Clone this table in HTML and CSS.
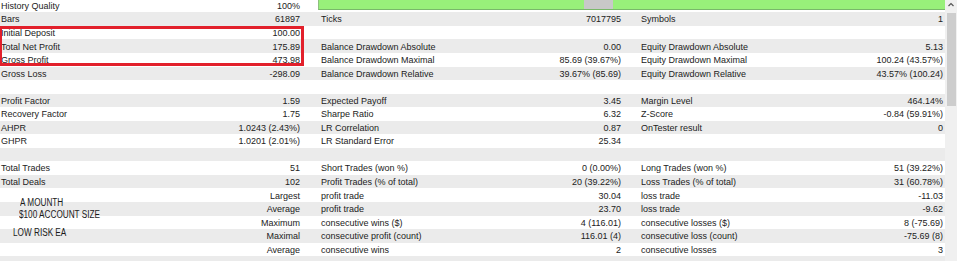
FILE: index.html
```html
<!DOCTYPE html>
<html>
<head>
<meta charset="utf-8">
<link rel="stylesheet" href="styles.css">
</head>
<body>
<div class="page">
  <div class="table">
    <div class="row">
      <div class="cell c1"><span>History Quality</span><span>100%</span></div>
      <div class="qbar"><span class="seg g1"></span><span class="seg gray"></span><span class="seg g2"></span></div>
    </div>
    <div class="row">
      <div class="cell c1"><span>Bars</span><span>61897</span></div>
      <div class="cell c2"><span>Ticks</span><span>7017795</span></div>
      <div class="cell c3"><span>Symbols</span><span>1</span></div>
    </div>
    <div class="row">
      <div class="cell c1"><span>Initial Deposit</span><span>100.00</span></div>
      <div class="cell c2"></div>
      <div class="cell c3"></div>
    </div>
    <div class="row">
      <div class="cell c1"><span>Total Net Profit</span><span>175.89</span></div>
      <div class="cell c2"><span>Balance Drawdown Absolute</span><span>0.00</span></div>
      <div class="cell c3"><span>Equity Drawdown Absolute</span><span>5.13</span></div>
    </div>
    <div class="row">
      <div class="cell c1"><span>Gross Profit</span><span>473.98</span></div>
      <div class="cell c2"><span>Balance Drawdown Maximal</span><span>85.69 (39.67%)</span></div>
      <div class="cell c3"><span>Equity Drawdown Maximal</span><span>100.24 (43.57%)</span></div>
    </div>
    <div class="row">
      <div class="cell c1"><span>Gross Loss</span><span>-298.09</span></div>
      <div class="cell c2"><span>Balance Drawdown Relative</span><span>39.67% (85.69)</span></div>
      <div class="cell c3"><span>Equity Drawdown Relative</span><span>43.57% (100.24)</span></div>
    </div>
    <div class="row"></div>
    <div class="row">
      <div class="cell c1"><span>Profit Factor</span><span>1.59</span></div>
      <div class="cell c2"><span>Expected Payoff</span><span>3.45</span></div>
      <div class="cell c3"><span>Margin Level</span><span>464.14%</span></div>
    </div>
    <div class="row">
      <div class="cell c1"><span>Recovery Factor</span><span>1.75</span></div>
      <div class="cell c2"><span>Sharpe Ratio</span><span>6.32</span></div>
      <div class="cell c3"><span>Z-Score</span><span>-0.84 (59.91%)</span></div>
    </div>
    <div class="row">
      <div class="cell c1"><span>AHPR</span><span>1.0243 (2.43%)</span></div>
      <div class="cell c2"><span>LR Correlation</span><span>0.87</span></div>
      <div class="cell c3"><span>OnTester result</span><span>0</span></div>
    </div>
    <div class="row">
      <div class="cell c1"><span>GHPR</span><span>1.0201 (2.01%)</span></div>
      <div class="cell c2"><span>LR Standard Error</span><span>25.34</span></div>
      <div class="cell c3"></div>
    </div>
    <div class="row"></div>
    <div class="row">
      <div class="cell c1"><span>Total Trades</span><span>51</span></div>
      <div class="cell c2"><span>Short Trades (won %)</span><span>0 (0.00%)</span></div>
      <div class="cell c3"><span>Long Trades (won %)</span><span>51 (39.22%)</span></div>
    </div>
    <div class="row">
      <div class="cell c1"><span>Total Deals</span><span>102</span></div>
      <div class="cell c2"><span>Profit Trades (% of total)</span><span>20 (39.22%)</span></div>
      <div class="cell c3"><span>Loss Trades (% of total)</span><span>31 (60.78%)</span></div>
    </div>
    <div class="row">
      <div class="cell c1"><span></span><span>Largest</span></div>
      <div class="cell c2"><span>profit trade</span><span>30.04</span></div>
      <div class="cell c3"><span>loss trade</span><span>-11.03</span></div>
    </div>
    <div class="row">
      <div class="cell c1"><span></span><span>Average</span></div>
      <div class="cell c2"><span>profit trade</span><span>23.70</span></div>
      <div class="cell c3"><span>loss trade</span><span>-9.62</span></div>
    </div>
    <div class="row">
      <div class="cell c1"><span></span><span>Maximum</span></div>
      <div class="cell c2"><span>consecutive wins ($)</span><span>4 (116.01)</span></div>
      <div class="cell c3"><span>consecutive losses ($)</span><span>8 (-75.69)</span></div>
    </div>
    <div class="row">
      <div class="cell c1"><span></span><span>Maximal</span></div>
      <div class="cell c2"><span>consecutive profit (count)</span><span>116.01 (4)</span></div>
      <div class="cell c3"><span>consecutive loss (count)</span><span>-75.69 (8)</span></div>
    </div>
    <div class="row">
      <div class="cell c1"><span></span><span>Average</span></div>
      <div class="cell c2"><span>consecutive wins</span><span>2</span></div>
      <div class="cell c3"><span>consecutive losses</span><span>3</span></div>
    </div>
    <div class="row"></div>
  </div>
  <div class="scrollbar">
    <svg class="arrow" width="12" height="9" viewBox="0 0 12 9"><polyline points="3.5,6 6,3.5 8.5,6" fill="none" stroke="#555" stroke-width="1.2"/></svg>
    <div class="thumb"></div>
  </div>
  <div class="highlight"></div>
  <div class="note n1">A MOUNTH</div>
  <div class="note n2">$100 ACCOUNT SIZE</div>
  <div class="note n3">LOW RISK EA</div>
</div>
</body>
</html>
```

FILE: styles.css
```css
html, body {
  margin: 0;
  padding: 0;
  background: #ffffff;
}
body {
  width: 960px;
  height: 261px;
  overflow: hidden;
  font-family: "Liberation Sans", Arial, sans-serif;
  font-size: 9px;
  color: #222222;
}
.page {
  position: relative;
  display: flex;
  width: 960px;
  height: 261px;
}
.table {
  width: 945px;
  margin-top: -1.2px;
  flex: none;
}
.row {
  display: grid;
  grid-template-columns: 302px 321px 322px;
  height: 13.55px;
}
.row:nth-child(even) {
  background: #ebebeb;
}
.cell {
  display: flex;
  justify-content: space-between;
  white-space: nowrap;
  line-height: 12.5px;
  padding-top: 1.05px;
}
.c1 { padding-left: 1px; padding-right: 2px; }
.c2 { padding-left: 19px; padding-right: 2px; }
.c3 { padding-left: 18px; padding-right: 2px; }
.qbar {
  grid-column: 2 / 4;
  margin-left: 16px;
  height: 11.5px;
  display: flex;
  border-left: 1px solid #8fbf80;
  border-bottom: 1px solid #79b86a;
  box-sizing: border-box;
}
.seg { display: block; height: 100%; }
.g1 { width: 265px; background: #98f07a; }
.gray { width: 29px; background: #c8c8c8; }
.g2 { flex: 1; background: #98f07a; }
.scrollbar {
  width: 12px;
  height: 261px;
  background: #f0f0f0;
  flex: none;
  display: flex;
  flex-direction: column;
  align-items: center;
}
.arrow { display: block; }
.thumb {
  width: 9px;
  height: 93px;
  margin-top: 4px;
  background: #cdcdcd;
}
.highlight {
  position: absolute;
  left: 0;
  top: 26px;
  width: 304px;
  height: 40px;
  box-sizing: border-box;
  border: 3px solid #e2202b;
  border-left-width: 2px;
}
.note {
  position: absolute;
  font-family: "Liberation Sans", Arial, sans-serif;
  font-size: 10px;
  line-height: 12px;
  color: #1a1a1a;
  white-space: nowrap;
  transform: scaleX(0.82);
  transform-origin: left center;
}
.n1 { left: 20px; top: 197px; }
.n2 { left: 19px; top: 209.3px; }
.n3 { left: 13px; top: 227px; }
```
